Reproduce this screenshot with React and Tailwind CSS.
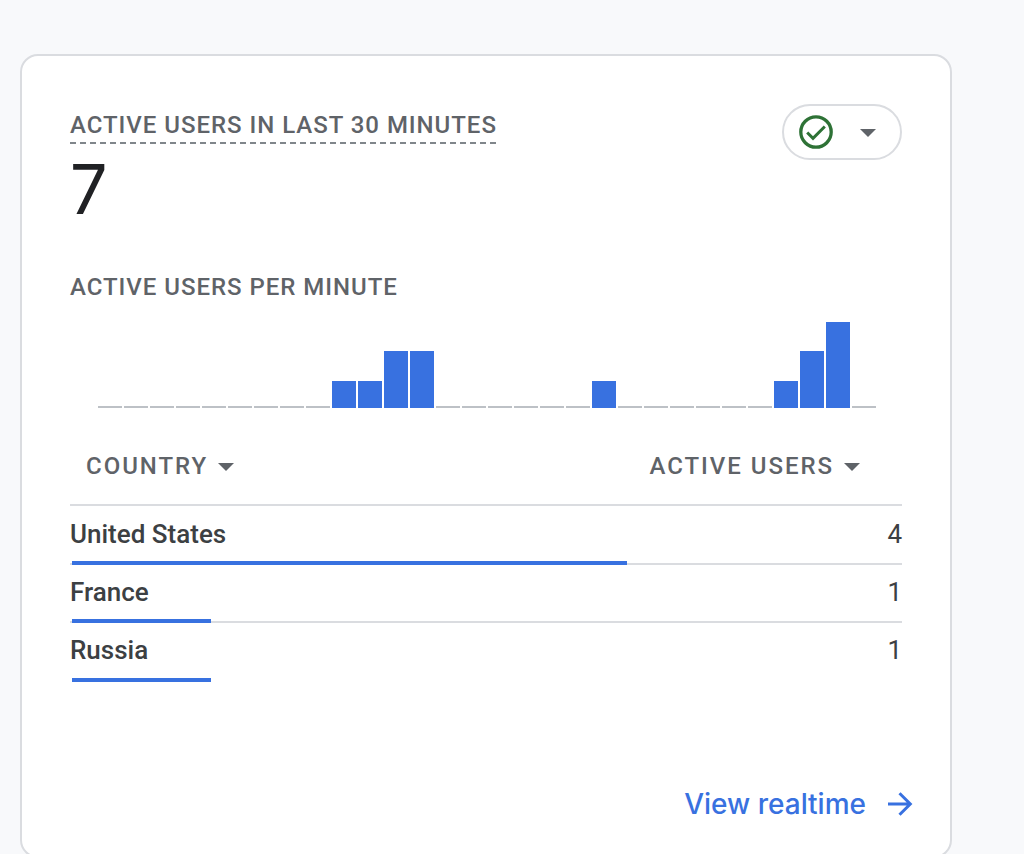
const minutes = [0, 0, 0, 0, 0, 0, 0, 0, 0, 1, 1, 2, 2, 0, 0, 0, 0, 0, 0, 1, 0, 0, 0, 0, 0, 0, 1, 2, 3, 0];

const barHeights = [
  'h-[2px] bg-[#bdc1c6]',
  'h-[27px] bg-[#3871e0]',
  'h-[57px] bg-[#3871e0]',
  'h-[86px] bg-[#3871e0]',
];

const countries = [
  { name: 'United States', users: 4, bar: 'top-[55px] w-[555px]', row: 'h-[59px] border-b-2 pt-3' },
  { name: 'France', users: 1, bar: 'top-[54px] w-[139px]', row: 'h-[58px] border-b-2 pt-[11px]' },
  { name: 'Russia', users: 1, bar: 'top-[55px] w-[139px]', row: 'h-[59px] pt-[11px]' },
];

function Caret({ className }) {
  return (
    <svg viewBox="0 0 16 8" className={className} fill="#5f6368" aria-hidden="true">
      <path d="M0 0h16L8 8z" />
    </svg>
  );
}

function StatusButton() {
  return (
    <button className="flex h-14 w-[120px] items-center rounded-full border-2 border-[#dadce0] pl-[15px]">
      <svg viewBox="0 0 34 34" className="size-[34px]" fill="none" stroke="#2e7236" aria-hidden="true">
        <circle cx="17" cy="17" r="15.2" strokeWidth="3.3" />
        <path d="M8.2 17.5l5.8 5.8L25.8 11.5" strokeWidth="3" />
      </svg>
      <Caret className="ml-[27px] mt-px h-2 w-4" />
    </button>
  );
}

function MinuteChart() {
  return (
    <div className="ml-7 mt-[21px] flex h-[86px] items-end gap-0.5">
      {minutes.map((count, i) => (
        <div key={i} className={`w-6 ${barHeights[count]}`} />
      ))}
    </div>
  );
}

function CountryRow({ name, users, bar, row }) {
  return (
    <div className={`relative flex justify-between border-[#dadce0] text-[26px] leading-8 text-[#3c4043] ${row}`}>
      <span className="font-medium">{name}</span>
      <span>{users}</span>
      <div className={`absolute left-0.5 h-1 bg-[#3871e0] ${bar}`} />
    </div>
  );
}

export default function App() {
  return (
    <div className="h-[854px] overflow-hidden bg-[#f8f9fb] pl-5 pt-[54px] font-['Roboto',sans-serif]">
      <section className="flex h-[804px] w-[932px] flex-col rounded-[18px] border-2 border-[#dadce0] bg-white px-12 pt-12">
        <header className="flex h-[112px] justify-between">
          <div>
            <h2 className="mt-[3px] h-[37px] w-[427px] whitespace-nowrap bg-[repeating-linear-gradient(90deg,#80868b_0_6px,transparent_6px_10px)] bg-[length:100%_2px] bg-bottom bg-no-repeat text-[24px] font-medium leading-9 tracking-[0.97px] text-[#5f6368]">
              ACTIVE USERS IN LAST 30 MINUTES
            </h2>
            <div className="mt-[9px] origin-left scale-x-[0.96] font-['Inter',sans-serif] text-[69px] leading-[72px] text-[#202124]">7</div>
          </div>
          <StatusButton />
        </header>
        <h3 className="mt-[53px] h-8 text-[24px] font-medium leading-9 tracking-[0.97px] text-[#5f6368]">
          ACTIVE USERS PER MINUTE
        </h3>
        <MinuteChart />
        <div className="flex h-[98px] items-center justify-between border-b-2 border-[#dadce0] pl-4 pr-[42px] pt-[20px] text-[24px] font-medium tracking-[1.97px] text-[#5f6368]">
          <div className="flex items-center">
            COUNTRY
            <Caret className="ml-[10px] mt-px h-2 w-4" />
          </div>
          <div className="flex items-center">
            ACTIVE USERS
            <Caret className="ml-[10px] mt-px h-2 w-4" />
          </div>
        </div>
        {countries.map((country) => (
          <CountryRow key={country.name} {...country} />
        ))}
        <a className="mt-[104px] -mr-[11px] flex items-center self-end font-['Inter',sans-serif] text-[28px] font-medium leading-9 text-[#3871e0]">
          View realtime
          <svg viewBox="0 0 26 26" className="ml-[21px] size-[26px]" fill="none" stroke="currentColor" strokeWidth="3" aria-hidden="true">
            <path d="M1 13h22M12.5 2.2L23.3 13 12.5 23.8" />
          </svg>
        </a>
      </section>
    </div>
  );
}
